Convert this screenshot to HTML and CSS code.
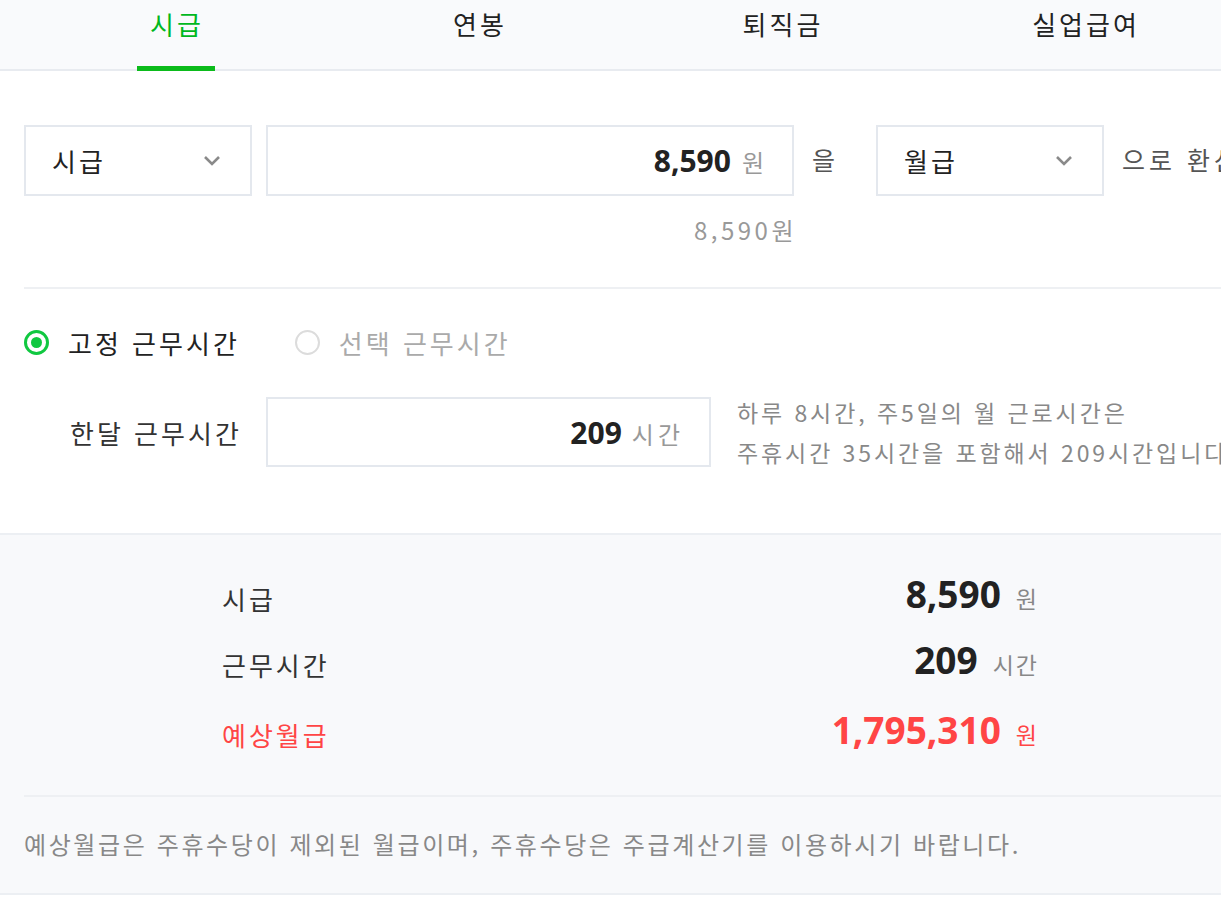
FILE: index.html
```html
<!DOCTYPE html>
<html lang="ko">
<head>
<meta charset="utf-8">
<title>시급 계산기</title>
<link rel="stylesheet" href="styles.css">
</head>
<body>
<div class="page">
  <nav class="tabs">
    <a class="tab active">시급</a>
    <a class="tab">연봉</a>
    <a class="tab">퇴직금</a>
    <a class="tab">실업급여</a>
  </nav>

  <section class="calc">
    <div class="convert-row">
      <div class="select sel-from">
        <span>시급</span>
        <svg class="chev" width="18" height="11" viewBox="0 0 18 11"><polyline points="2,2 9,9 16,2" fill="none" stroke="#8a8a8a" stroke-width="2.6"/></svg>
      </div>
      <div class="input amount">
        <span class="num">8,590</span><span class="unit">원</span>
      </div>
      <span class="joiner">을</span>
      <div class="select sel-to">
        <span>월급</span>
        <svg class="chev" width="18" height="11" viewBox="0 0 18 11"><polyline points="2,2 9,9 16,2" fill="none" stroke="#8a8a8a" stroke-width="2.6"/></svg>
      </div>
      <span class="tail">으로 환산</span>
    </div>
    <div class="hint-row">
      <span class="hint">8,590원</span>
    </div>

    <div class="divider"></div>

    <div class="radio-row">
      <label class="radio-item on"><span class="radio"><span class="dot"></span></span><span class="rlabel">고정 근무시간</span></label>
      <label class="radio-item off"><span class="radio"></span><span class="rlabel">선택 근무시간</span></label>
    </div>

    <div class="hours-row">
      <span class="hours-label">한달 근무시간</span>
      <div class="input hours">
        <span class="num">209</span><span class="unit">시간</span>
      </div>
      <p class="help">하루 8시간, 주5일의 월 근로시간은<br>주휴시간 35시간을 포함해서 209시간입니다.</p>
    </div>
  </section>

  <section class="summary">
    <div class="sum-list">
      <div class="sum-row r1">
        <span class="sum-label">시급</span>
        <span class="sum-val"><b>8,590</b><span class="sunit">원</span></span>
      </div>
      <div class="sum-row r2">
        <span class="sum-label">근무시간</span>
        <span class="sum-val"><b>209</b><span class="sunit">시간</span></span>
      </div>
      <div class="sum-row r3 red">
        <span class="sum-label">예상월급</span>
        <span class="sum-val"><b>1,795,310</b><span class="sunit">원</span></span>
      </div>
    </div>
    <div class="divider sum-divider"></div>
    <p class="note">예상월급은 주휴수당이 제외된 월급이며, 주휴수당은 주급계산기를 이용하시기 바랍니다.</p>
  </section>
</div>
</body>
</html>
```

FILE: styles.css
```css
html, body {
  margin: 0;
  padding: 0;
  background: #ffffff;
  overflow: hidden;
}
body {
  font-family: "Noto Sans CJK KR", "Noto Sans", sans-serif;
  color: #222;
}
.page {
  width: 1300px;
}

/* tabs */
.tabs {
  display: flex;
  height: 69px;
  padding-left: 24px;
  background: #f9fafc;
  border-bottom: 2px solid #e8ebf0;
}
.tab {
  position: relative;
  width: 303px;
  text-align: center;
  font-size: 26px;
  letter-spacing: 3px;
  text-indent: 3px;
  line-height: 48px;
  color: #222;
}
.tab.active {
  color: #00b81e;
}
.tab.active::after {
  content: "";
  position: absolute;
  left: 50%;
  bottom: -2px;
  width: 78px;
  height: 5px;
  margin-left: -39px;
  background: #0bbb1b;
}

/* calculator */
.calc {
  padding: 54px 0 0 24px;
  height: 408px;
  border-bottom: 2px solid #eceff3;
}
.convert-row {
  display: flex;
  align-items: center;
}
.select, .input {
  box-sizing: border-box;
  height: 71px;
  border: 2px solid #e4e8ee;
  background: #fff;
  display: flex;
  align-items: center;
}
.select {
  width: 228px;
  padding: 0 29px 0 26px;
  justify-content: space-between;
  font-size: 26px;
  letter-spacing: 3px;
  color: #222;
}
.chev { display: block; }
.input {
  justify-content: flex-end;
  align-items: baseline;
  padding: 0 28px 0 0;
  line-height: 67px;
}
.amount {
  width: 528px;
  margin-left: 14px;
}
.num {
  font-family: "Open Sans", "Liberation Sans", sans-serif;
  font-weight: 700;
  font-size: 30px;
  color: #222;
}
.unit {
  margin-left: 11px;
  font-size: 24px;
  letter-spacing: 3px;
  color: #999;
  margin-right: -3px;
}
.hours .unit {
  letter-spacing: 4px;
  margin-left: 10px;
}
.joiner {
  width: 64px;
  padding-left: 18px;
  font-size: 25px;
  color: #555;
  margin-top: -4px;
}
.tail {
  margin-left: 18px;
  font-size: 25px;
  letter-spacing: 4px;
  color: #555;
  white-space: nowrap;
  margin-top: -4px;
}
.hint-row {
  width: 773px;
  display: flex;
  justify-content: flex-end;
  margin-top: 18px;
}
.hint {
  font-size: 24px;
  letter-spacing: 3.5px;
  color: #999;
  line-height: 32px;
}
.divider {
  height: 2px;
  background: #eef0f3;
}
.calc .divider {
  margin-top: 41px;
}

.radio-row {
  display: flex;
  align-items: center;
  margin-top: 39px;
  height: 28px;
}
.radio-item {
  display: flex;
  align-items: center;
  margin-right: 55px;
}
.radio {
  box-sizing: border-box;
  width: 25px;
  height: 25px;
  border-radius: 50%;
  border: 2px solid #dcdcdc;
  display: flex;
  align-items: center;
  justify-content: center;
  background: #fff;
}
.on .radio {
  border: 3px solid #10c840;
}
.dot {
  width: 11px;
  height: 11px;
  border-radius: 50%;
  background: #10c840;
}
.rlabel {
  margin-left: 19px;
  font-size: 26px;
  letter-spacing: 3px;
  color: #222;
}
.off .rlabel { color: #aaa; }

.hours-row {
  display: flex;
  align-items: center;
  margin-top: 36px;
}
.hours-label {
  width: 196px;
  padding-left: 46px;
  font-size: 26px;
  letter-spacing: 3px;
  color: #333;
  white-space: nowrap;
}
.hours {
  width: 445px;
  height: 70px;
}
.help {
  margin: 0 0 0 26px;
  font-size: 23px;
  letter-spacing: 2.9px;
  line-height: 40px;
  color: #888;
  white-space: nowrap;
}

/* summary */
.summary {
  background: #f8f9fb;
  padding: 0 0 0 24px;
  height: 358px;
  border-bottom: 2px solid #eceff3;
}
.sum-list {
  margin-left: 198px;
  width: 815px;
  padding-bottom: 42px;
}
.sum-row {
  display: flex;
  align-items: flex-end;
  justify-content: space-between;
}
.r1 { height: 82px; }
.r2 { height: 66px; }
.r3 { height: 70px; }
.sum-label {
  font-size: 26px;
  letter-spacing: 3px;
  color: #333;
  line-height: 36px;
}
.sum-val {
  display: flex;
  align-items: baseline;
}
.sum-val b {
  font-family: "Open Sans", "Liberation Sans", sans-serif;
  font-weight: 700;
  font-size: 37px;
  line-height: 46px;
  color: #222;
}
.sunit {
  margin-left: 15px;
  font-size: 23px;
  letter-spacing: 2px;
  margin-right: -2px;
  color: #888;
}
.red .sum-label,
.red .sum-val b,
.red .sunit {
  color: #ff4545;
}
.note {
  margin: 0;
  padding-top: 30px;
  font-size: 24px;
  letter-spacing: 2.6px;
  line-height: 34px;
  color: #888;
  white-space: nowrap;
}
```
